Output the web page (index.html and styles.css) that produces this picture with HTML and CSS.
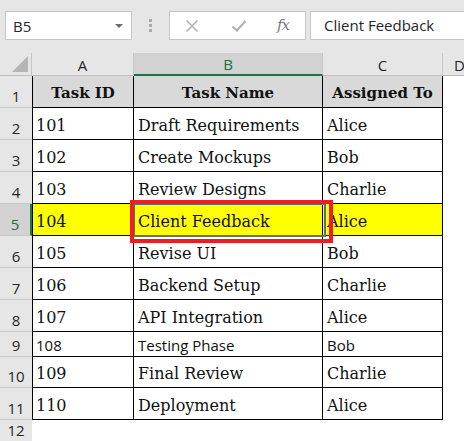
FILE: index.html
```html
<!DOCTYPE html>
<html>
<head>
<meta charset="utf-8">
<link rel="stylesheet" href="styles.css">
</head>
<body>
<div class="app">
  <div class="topbar">
    <div class="namebox"><span class="name">B5</span><span class="caret"></span></div>
    <div class="sep"><span class="dot"></span><span class="dot"></span><span class="dot"></span></div>
    <div class="fbtns">
      <svg class="ico" width="14" height="14" viewBox="0 0 14 14"><path d="M1.5 1.5 L12.5 12.5 M12.5 1.5 L1.5 12.5" stroke="#b3b3b3" stroke-width="1.6" fill="none"/></svg>
      <svg class="ico" width="16" height="14" viewBox="0 0 16 14"><path d="M1.5 7.5 L6 11.5 L14.5 2" stroke="#b3b3b3" stroke-width="2.2" fill="none"/></svg>
      <span class="fx">fx</span>
    </div>
    <div class="fcontent">Client Feedback</div>
  </div>

  <div class="sheet">
    <div class="corner"><span class="tri"></span></div>
    <div class="ch">A</div>
    <div class="ch sel">B</div>
    <div class="ch">C</div>
    <div class="ch last">D</div>

    <div class="rh">1</div>
    <div class="c a hd">Task ID</div>
    <div class="c hd">Task Name</div>
    <div class="c hd">Assigned To</div>
    <div class="e"></div>

    <div class="rh">2</div>
    <div class="c a">101</div>
    <div class="c">Draft Requirements</div>
    <div class="c">Alice</div>
    <div class="e"></div>

    <div class="rh">3</div>
    <div class="c a">102</div>
    <div class="c">Create Mockups</div>
    <div class="c">Bob</div>
    <div class="e"></div>

    <div class="rh">4</div>
    <div class="c a">103</div>
    <div class="c">Review Designs</div>
    <div class="c">Charlie</div>
    <div class="e"></div>

    <div class="rh rsel">5</div>
    <div class="c a yl">104</div>
    <div class="c yl active">Client Feedback</div>
    <div class="c yl">Alice</div>
    <div class="e"></div>

    <div class="rh">6</div>
    <div class="c a">105</div>
    <div class="c">Revise UI</div>
    <div class="c">Bob</div>
    <div class="e"></div>

    <div class="rh">7</div>
    <div class="c a">106</div>
    <div class="c">Backend Setup</div>
    <div class="c">Charlie</div>
    <div class="e"></div>

    <div class="rh">8</div>
    <div class="c a">107</div>
    <div class="c">API Integration</div>
    <div class="c">Alice</div>
    <div class="e"></div>

    <div class="rh">9</div>
    <div class="c a sans">108</div>
    <div class="c sans">Testing Phase</div>
    <div class="c sans">Bob</div>
    <div class="e"></div>

    <div class="rh">10</div>
    <div class="c a">109</div>
    <div class="c">Final Review</div>
    <div class="c">Charlie</div>
    <div class="e"></div>

    <div class="rh">11</div>
    <div class="c a">110</div>
    <div class="c">Deployment</div>
    <div class="c">Alice</div>
    <div class="e"></div>

    <div class="rh">12</div>
    <div class="e"></div>
    <div class="e"></div>
    <div class="e"></div>
    <div class="e"></div>
  </div>
</div>
</body>
</html>
```

FILE: styles.css
```css
html, body {
  margin: 0;
  padding: 0;
  width: 464px;
  height: 441px;
  overflow: hidden;
  background: #ffffff;
}

* { box-sizing: border-box; }

.app {
  width: 464px;
  height: 441px;
  display: flex;
  flex-direction: column;
  font-family: "Open Sans", "Liberation Sans", sans-serif;
  overflow: hidden;
}

.topbar {
  height: 53px;
  flex: none;
  background: #e6e6e6;
  display: flex;
  align-items: flex-start;
  padding: 11px 0 0 5px;
  overflow: hidden;
}

.topbar > * { flex: none; }

.namebox {
  width: 127px;
  height: 29px;
  background: #fff;
  border: 1px solid #c6c6c6;
  display: flex;
  align-items: center;
  justify-content: space-between;
  padding: 0 8px 0 7px;
}

.name {
  font-size: 15px;
  color: #262626;
}

.caret {
  width: 0;
  height: 0;
  border-left: 4px solid transparent;
  border-right: 4px solid transparent;
  border-top: 4px solid #6d6d6d;
  margin-top: 1px;
}

.sep {
  width: 37px;
  height: 29px;
  display: flex;
  flex-direction: column;
  align-items: center;
  justify-content: center;
  gap: 2px;
}

.dot {
  width: 3px;
  height: 3px;
  background: #a9a9a9;
}

.fbtns {
  width: 137px;
  height: 29px;
  background: #fff;
  border: 1px solid #c6c6c6;
  display: flex;
  align-items: center;
  padding-left: 15px;
}

.fbtns .ico:first-child { margin-right: 32px; }
.fbtns .ico:nth-child(2) { margin-right: 30px; }

.fx {
  font-family: "DejaVu Serif", serif;
  font-style: italic;
  font-size: 15px;
  color: #7b7b7b;
  letter-spacing: -1px;
  margin-top: -2px;
}

.fcontent {
  margin-left: 4px;
  width: 170px;
  height: 29px;
  background: #fff;
  border: 1px solid #c6c6c6;
  border-right: none;
  padding-left: 13px;
  font-size: 15px;
  color: #262626;
  line-height: 26px;
}

.sheet {
  flex: 1;
  display: grid;
  grid-template-columns: 32px 102px 189px 120px 21px;
  grid-template-rows: 23px repeat(8, 32px) 25px 31px 32px 1fr;
  background: #fff;
}

.corner {
  background: #e6e6e6;
  border-right: 1px solid #c6c6c6;
  border-bottom: 1px solid #bdbdbd;
  display: flex;
  align-items: flex-end;
  justify-content: flex-end;
  padding: 0 3px 3px 0;
}

.tri {
  width: 0;
  height: 0;
  border-left: 16px solid transparent;
  border-bottom: 16px solid #b5b5b5;
}

.ch {
  background: #e6e6e6;
  border-right: 1px solid #c6c6c6;
  border-bottom: 1px solid #bdbdbd;
  font-size: 15px;
  color: #262626;
  display: flex;
  align-items: center;
  justify-content: center;
  padding-top: 1px;
}

.ch.sel {
  background: #d2d2d2;
  color: #1e6b40;
  border-bottom: 2px solid #217346;
}

.ch.last {
  border-right: none;
  justify-content: flex-start;
  padding-left: 11px;
}

.rh {
  background: #e6e6e6;
  border-bottom: 1px solid #c6c6c6;
  font-size: 15px;
  color: #262626;
  display: flex;
  align-items: flex-end;
  justify-content: center;
  padding-bottom: 1px;
  line-height: 20px;
}

.rh.rsel {
  background: #d2d2d2;
  color: #1e6b40;
  border-right: 2px solid #217346;
}

.c {
  border-right: 1px solid #000;
  border-bottom: 1px solid #000;
  font-family: "DejaVu Serif", serif;
  font-size: 16px;
  line-height: 18px;
  color: #111;
  display: flex;
  align-items: flex-end;
  padding: 0 0 4px 4px;
  white-space: nowrap;
}

.c.a {
  border-left: 1px solid #000;
  padding-left: 3px;
}

.c.hd {
  background: #d9d9d9;
  font-weight: bold;
  font-size: 15px;
  justify-content: center;
  padding-left: 0;
  padding-bottom: 5px;
}

.c.sans {
  font-family: "Open Sans", "Liberation Sans", sans-serif;
  font-size: 15px;
  padding-bottom: 2px;
}

.c.yl { background: #ffff00; }

.c.active {
  position: relative;
  z-index: 2;
}

.c.active::before {
  content: "";
  position: absolute;
  left: -1px;
  top: -1px;
  right: -4px;
  bottom: -2px;
  border: 2px solid #5b7565;
}

.c.active::after {
  content: "";
  position: absolute;
  left: -4px;
  top: -4px;
  width: 195px;
  height: 35px;
  border: 4px solid #ee1c24;
}

.e {
  background: #fff;
}
```
